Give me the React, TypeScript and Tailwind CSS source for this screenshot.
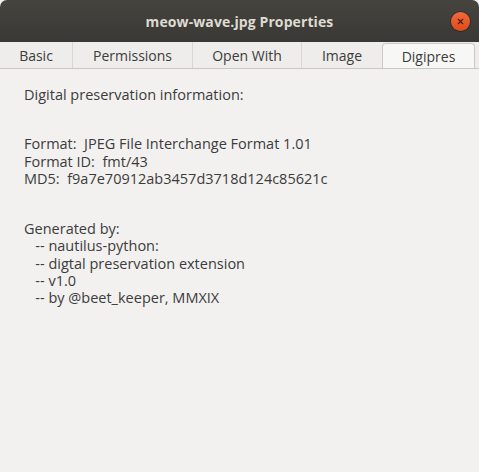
import { X } from "lucide-react";

const tabs = ["Basic", "Permissions", "Open With", "Image", "Digipres"];
const tabWidths = ["w-[73px]", "w-[120px]", "w-[109px]", "w-[80px]", "w-[93px]"];

const infoLines = [
  "Format:  JPEG File Interchange Format 1.01",
  "Format ID:  fmt/43",
  "MD5:  f9a7e70912ab3457d3718d124c85621c",
];

const creditLines = [
  "Generated by:",
  "   -- nautilus-python:",
  "   -- digtal preservation extension",
  "   -- v1.0",
  "   -- by @beet_keeper, MMXIX",
];

const App = () => {
  return (
    <div className="w-[479px] h-[472px] bg-[#f2f1f0] flex flex-col overflow-hidden font-['Open_Sans',sans-serif]">
      {/* header bar */}
      <div className="relative h-[42px] shrink-0 rounded-t-[7px] bg-gradient-to-b from-[#45443f] to-[#393834] flex items-center justify-center">
        <span className="text-[14px] font-bold text-[#dfdbd2] tracking-[0.1px]">meow-wave.jpg Properties</span>
        <button className="absolute right-[9px] top-[12px] w-[19px] h-[19px] rounded-full bg-gradient-to-b from-[#f0693a] to-[#df4a16] flex items-center justify-center shadow-[0_0_0_1px_rgba(0,0,0,0.25)]">
          <X size={9} strokeWidth={3} className="text-[#4a1a08]" />
        </button>
      </div>

      {/* tabs */}
      <div className="flex h-[27px] shrink-0 border-b border-[#cdc7c2] bg-[#eeedeb]">
        {tabs.map((tab, i) => {
          const active = i === tabs.length - 1;
          return (
            <div
              key={tab}
              className={`${tabWidths[i]} flex items-center justify-center text-[14px] text-[#3c3c3c] ${
                active
                  ? "bg-[#f7f7f6] border border-b-0 border-[#cdc7c2] rounded-t-[4px] mt-[1px]"
                  : "border-r border-[#dad6d2]"
              } ${i === tabs.length - 2 ? "border-r-0" : ""}`}
            >
              {tab}
            </div>
          );
        })}
      </div>

      {/* body */}
      <div className="px-[24px] pt-[17px] text-[14.5px] leading-[17.3px] text-[#3c3c3c] whitespace-pre">
        <p>Digital preservation information:</p>
        <div className="mt-[32px]">
          {infoLines.map((line) => (
            <p key={line}>{line}</p>
          ))}
        </div>
        <div className="mt-[33px]">
          {creditLines.map((line) => (
            <p key={line}>{line}</p>
          ))}
        </div>
      </div>
    </div>
  );
};

export default App;
